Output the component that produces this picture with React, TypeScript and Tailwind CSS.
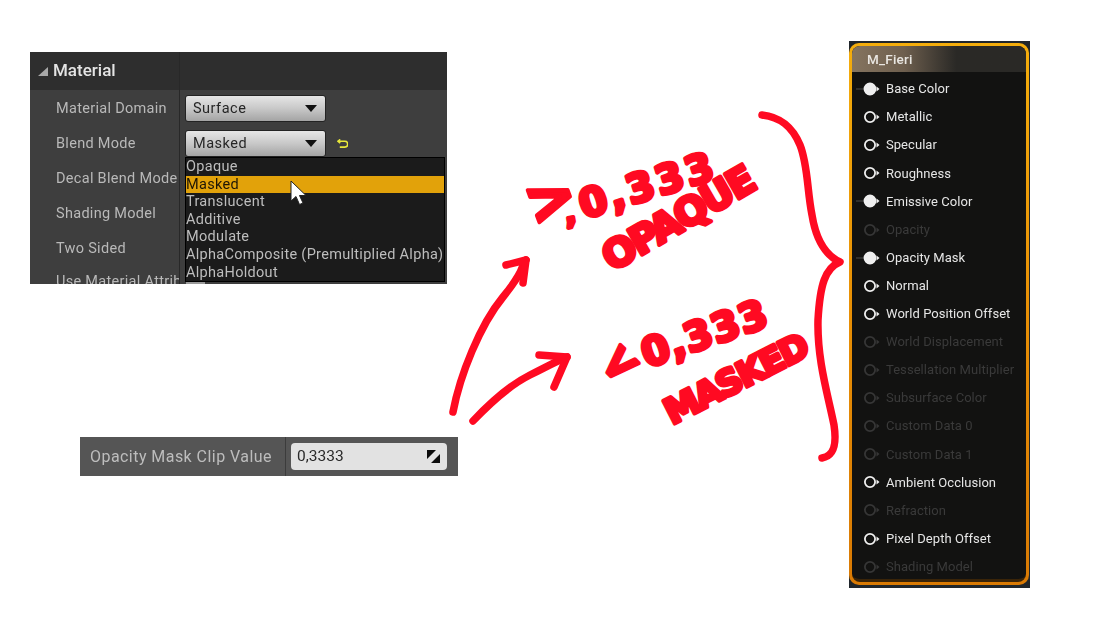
const detailRows = ['Material Domain', 'Blend Mode', 'Decal Blend Mode', 'Shading Model', 'Two Sided'];
const blendModes = ['Opaque', 'Masked', 'Translucent', 'Additive', 'Modulate', 'AlphaComposite (Premultiplied Alpha)', 'AlphaHoldout'];

const pins = [
  { name: 'Base Color', state: 'linked' },
  { name: 'Metallic', state: 'on' },
  { name: 'Specular', state: 'on' },
  { name: 'Roughness', state: 'on' },
  { name: 'Emissive Color', state: 'linked' },
  { name: 'Opacity', state: 'off' },
  { name: 'Opacity Mask', state: 'linked' },
  { name: 'Normal', state: 'on' },
  { name: 'World Position Offset', state: 'on' },
  { name: 'World Displacement', state: 'off' },
  { name: 'Tessellation Multiplier', state: 'off' },
  { name: 'Subsurface Color', state: 'off' },
  { name: 'Custom Data 0', state: 'off' },
  { name: 'Custom Data 1', state: 'off' },
  { name: 'Ambient Occlusion', state: 'on' },
  { name: 'Refraction', state: 'off' },
  { name: 'Pixel Depth Offset', state: 'on' },
  { name: 'Shading Model', state: 'off' },
];

function Combo({ label }: { label: string }) {
  return (
    <div className="w-[141px] h-[27px] rounded-[3px] border border-[#232323] bg-gradient-to-b from-[#e6e6e6] via-[#c8c8c8] to-[#a4a4a4] flex items-center justify-between pl-[7px] pr-[8px]">
      <span className="text-[14.5px] tracking-[0.5px] text-[#262626]">{label}</span>
      <svg width="12" height="7" viewBox="0 0 12 7"><path d="M0 0h12L6 7z" fill="#111" /></svg>
    </div>
  );
}

function MaterialPanel() {
  return (
    <div className="absolute left-[30px] top-[52px] w-[417px] h-[232px] overflow-hidden bg-[#3e3e3e] font-['Roboto',sans-serif] blur-[0.3px]">
      <div className="h-[38px] bg-[#2e2e2e] flex items-center pl-[8px] gap-[4px]">
        <svg width="11" height="9" viewBox="0 0 11 9"><path d="M0 9L10 0v9z" fill="#a8a8a8" /></svg>
        <span className="text-[17px] font-medium text-[#e4e4e4]">Material</span>
      </div>
      <div className="absolute left-[149px] top-0 bottom-0 w-px bg-[#282828]" />
      <div className="pt-[1px]">
        {detailRows.map(row => (
          <div key={row} className="h-[35px] flex items-center">
            <span className="w-[155px] pl-[26px] text-[14.5px] tracking-[0.3px] text-[#b9b9b9] whitespace-nowrap">{row}</span>
            {row === 'Material Domain' && <Combo label="Surface" />}
            {row === 'Blend Mode' && (
              <div className="flex items-center gap-[11px]">
                <Combo label="Masked" />
                <svg width="11" height="10" viewBox="0 0 12 11" fill="none" stroke="#e8e83a" strokeWidth="1.8">
                  <path d="M1 2.5h7.500a2.500 2.500 0 0 1 0 6.500H3" />
                  <path d="M3.500 0.500L1 2.500l2.500 2" />
                </svg>
              </div>
            )}
          </div>
        ))}
      </div>
      <div className="-mt-[3px] h-[35px] flex items-start">
        <span className="w-[150px] pl-[26px] pt-[8px] text-[14.5px] tracking-[0.3px] text-[#b9b9b9] whitespace-nowrap overflow-hidden">Use Material Attributes</span>
      </div>
      <div className="absolute left-[156px] top-[230px] w-[19px] h-[2px] bg-[#9a9a9a]" />
      <div className="absolute left-[155px] top-[105px] w-[260px] h-[125px] border border-black bg-[#1b1b1b] flex flex-col overflow-hidden">
        {blendModes.map(mode => (
          <div
            key={mode}
            className={`h-[17.6px] shrink-0 leading-[17px] text-[14.5px] tracking-[0.3px] whitespace-nowrap ${mode === 'Masked' ? 'bg-[#e2a20a] text-[#1d1606]' : 'text-[#bdbdbd]'}`}
          >
            {mode}
          </div>
        ))}
      </div>
      <svg className="absolute left-[260px] top-[128px]" width="17" height="26" viewBox="0 0 17 26">
        <path d="M1 1v20l5-4.500 3.500 8 3.500-1.500-3.500-7.500H16z" fill="#fff" stroke="#222" strokeWidth="1" />
      </svg>
    </div>
  );
}

function ClipValue() {
  return (
    <div className="absolute left-[80px] top-[437px] w-[378px] h-[39px] bg-[#555555] flex items-center font-['Roboto',sans-serif] blur-[0.3px]">
      <span className="w-[206px] pl-[10px] text-[16px] tracking-[0.45px] text-[#bdbdbd] whitespace-nowrap border-r border-[#3c3c3c] h-full flex items-center">Opacity Mask Clip Value</span>
      <div className="ml-[5px] w-[156px] h-[27px] rounded-[4px] bg-[#e2e2e2] flex items-center justify-between pl-[6px] pr-[7px]">
        <span className="text-[15.5px] text-[#2a2a2a]">0,3333</span>
        <svg width="13" height="13" viewBox="0 0 13 13">
          <path d="M0 0h9L0 9zM13 4v9H4z" fill="#0c0c0c" />
        </svg>
      </div>
    </div>
  );
}

function PinIcon({ state }: { state: string }) {
  const color = state === 'off' ? '#363636' : '#efefef';
  return (
    <svg width="26" height="14" viewBox="0 0 26 14" className="shrink-0">
      {state === 'linked' && <path d="M0 7h9" stroke="#4a4a4a" strokeWidth="1" />}
      <circle cx="14" cy="7" r={state === 'linked' ? 5.5 : 5.1} fill={state === 'linked' ? color : 'none'} stroke={color} strokeWidth="1.8" />
      <path d="M20.500 4.600L23.500 7l-3 2.400z" fill={color} />
    </svg>
  );
}

function MaterialNode() {
  return (
    <div className="absolute left-[849px] top-[41px] w-[181px] h-[547px] bg-[#20262b] pt-[2px] pr-[1px] pb-[3px] font-['Roboto',sans-serif] blur-[0.3px]">
      <div className="h-full rounded-[10px] bg-gradient-to-b from-[#f4ad0c] via-[#e88f05] to-[#d97a04] p-[3px]">
        <div className="h-full rounded-[8px] bg-[#121211] flex flex-col overflow-hidden border-b-[3px] border-[#3a2408]">
          <div className="h-[26px] shrink-0 bg-gradient-to-r from-[#85745f] via-[#6e5f4e] via-30% to-[#2a2926] to-60% flex items-center pl-[15px] text-[13.5px] font-medium tracking-[0.2px] text-[#e9e6e1]">
            M_Fieri
          </div>
          <div className="pt-[3px] pl-[4px] flex flex-col">
            {pins.map(pin => (
              <div key={pin.name} className="h-[28.1px] shrink-0 flex items-center gap-[4px]">
                <PinIcon state={pin.state} />
                <span className={`text-[13px] tracking-[0.05px] whitespace-nowrap ${pin.state === 'off' ? 'text-[#3a3a3a]' : 'text-[#e6e6e6]'}`}>{pin.name}</span>
              </div>
            ))}
          </div>
        </div>
      </div>
    </div>
  );
}

function Scribbles() {
  const ink = '#ff0a22';
  return (
    <svg className="absolute left-0 top-0" width="1120" height="630" viewBox="0 0 1120 630" fill="none" stroke={ink} strokeWidth="7.5" strokeLinecap="round" strokeLinejoin="round">
      <path d="M453 412C460 375 480 325 503 297S520 268 526 260" />
      <path d="M506 265L526 260L523 283" />
      <path d="M473 421C490 403 510 385 530 375S555 362 567 357" />
      <path d="M539 355L567 357L554 387" />
      <path d="M762 115C780 117 792 126 800 145C808 165 807 190 812 215C816 240 825 255 840 262C825 268 820 285 818 320C817 360 828 395 834 425C837 445 834 456 822 458" />
      <g fontFamily="'DejaVu Sans',sans-serif" fontWeight="700" fill={ink} stroke={ink} strokeWidth="4">
        <text x="534" y="226" fontSize="60" transform="rotate(-20 534 226)">{'>'}</text>
        <text x="566" y="224" fontSize="30" transform="rotate(-10 566 224)">,</text>
        <text x="584" y="219" fontSize="40" letterSpacing="3" transform="rotate(-17 584 219)">0,333</text>
        <text x="612" y="272" fontSize="39" letterSpacing="-2" transform="rotate(-30 612 272)">OPAQUE</text>
        <text x="616" y="388" fontSize="46" transform="rotate(-45 616 388)">{'<'}</text>
        <text x="647" y="368" fontSize="40" letterSpacing="1" transform="rotate(-19 647 368)">0,333</text>
        <text x="672" y="425" fontSize="35" letterSpacing="-2" transform="rotate(-27 672 425)">MASKED</text>
      </g>
    </svg>
  );
}

export default function App() {
  return (
    <div className="relative w-[1120px] h-[630px] bg-white overflow-hidden">
      <MaterialPanel />
      <ClipValue />
      <Scribbles />
      <MaterialNode />
    </div>
  );
}
